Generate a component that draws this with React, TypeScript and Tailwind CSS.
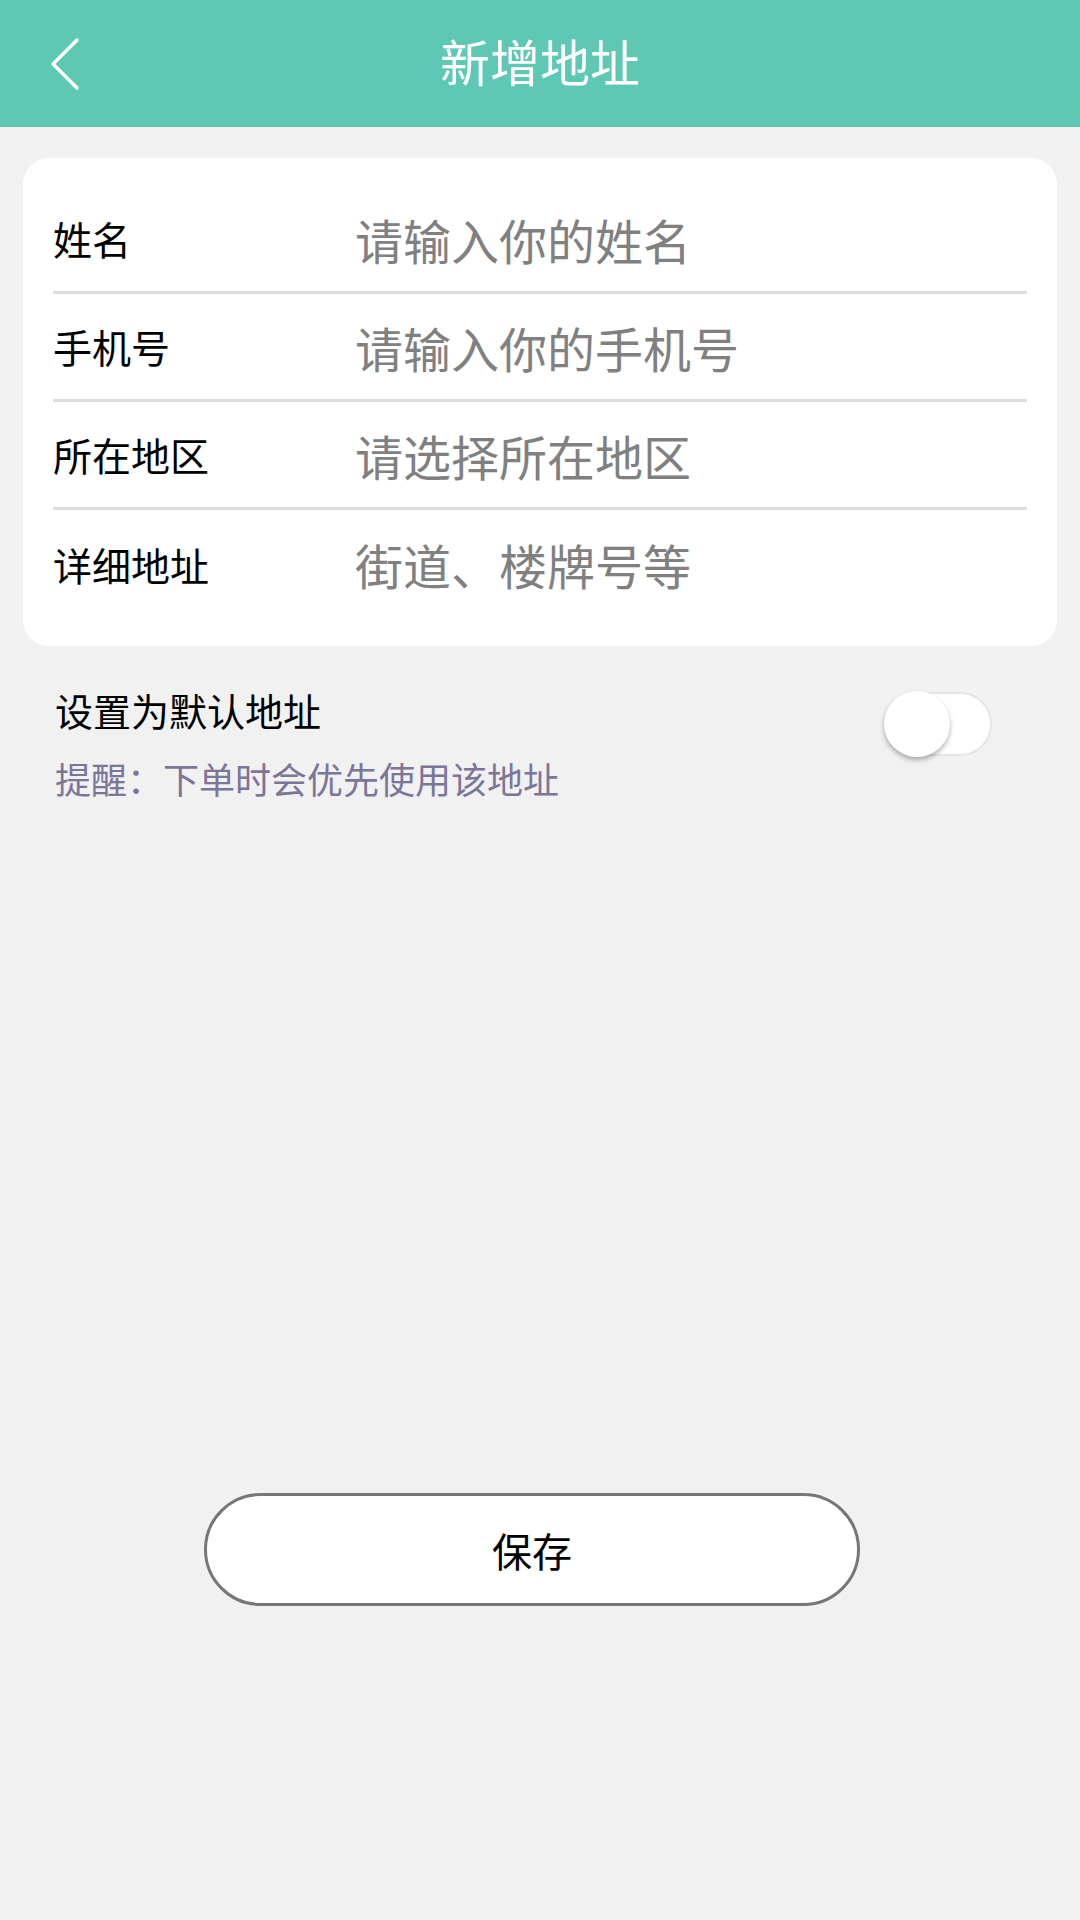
import { useState } from 'react';

const fields = [
  { label: '姓名', placeholder: '请输入你的姓名' },
  { label: '手机号', placeholder: '请输入你的手机号' },
  { label: '所在地区', placeholder: '请选择所在地区' },
  { label: '详细地址', placeholder: '街道、楼牌号等' },
];

const AddAddress = () => {
  const [isDefault, setIsDefault] = useState(false);

  return (
    <div
      className="min-h-[1920px] w-[1080px] bg-[#f2f1f2] flex flex-col"
      style={{ fontFamily: '"Noto Sans CJK SC", "Noto Sans", sans-serif' }}
    >
      {/* header */}
      <div className="h-[127px] bg-[#5ec8b5] flex items-center px-[40px] relative">
        <button className="w-[50px] h-[60px] flex items-center justify-center">
          <svg width="34" height="54" viewBox="0 0 34 54" fill="none">
            <path d="M29 3 L5 27 L29 51" stroke="white" strokeWidth="3.5" strokeLinecap="round" strokeLinejoin="round" />
          </svg>
        </button>
        <h1 className="flex-1 text-center text-white text-[50px] leading-none pr-[50px] -mt-[8px]">新增地址</h1>
      </div>

      {/* form card */}
      <div className="mx-[23px] mt-[31px] bg-white rounded-[26px] px-[30px] py-[28px]">
        {fields.map((f, i) => (
          <div
            key={f.label}
            className={`h-[108px] flex items-center ${i < fields.length - 1 ? 'border-b-[3px] border-[#dcdcdc]' : ''}`}
          >
            <span className="w-[302px] text-[39px] text-black">{f.label}</span>
            <input
              placeholder={f.placeholder}
              className="flex-1 bg-transparent text-[48px] text-black placeholder:text-[#808080] outline-none"
            />
          </div>
        ))}
      </div>

      {/* default switch */}
      <div className="flex items-start justify-between pl-[55px] pr-[88px] mt-[38px]">
        <div className="flex flex-col">
          <span className="text-[38px] text-black leading-[52px]">设置为默认地址</span>
          <span className="text-[36px] text-[#7b7698] leading-[48px] mt-[18px]">提醒：下单时会优先使用该地址</span>
        </div>
        <button
          onClick={() => setIsDefault(!isDefault)}
          className={`mt-[8px] w-[108px] h-[64px] rounded-full border-2 relative ${isDefault ? 'bg-[#5ec8b5] border-[#5ec8b5]' : 'bg-white border-[#e6e6e6]'}`}
        >
          <span
            className={`absolute top-[-3px] w-[66px] h-[66px] rounded-full bg-white shadow-[0_3px_5px_rgba(0,0,0,0.3)] ${isDefault ? 'left-[40px]' : 'left-[-2px]'}`}
          />
        </button>
      </div>

      {/* save */}
      <div className="mt-[691px] pl-[204px]">
        <button className="w-[656px] h-[113px] rounded-full border-[3px] border-[#777777] bg-white text-[40px] text-black">
          保存
        </button>
      </div>
    </div>
  );
};

export default AddAddress;
